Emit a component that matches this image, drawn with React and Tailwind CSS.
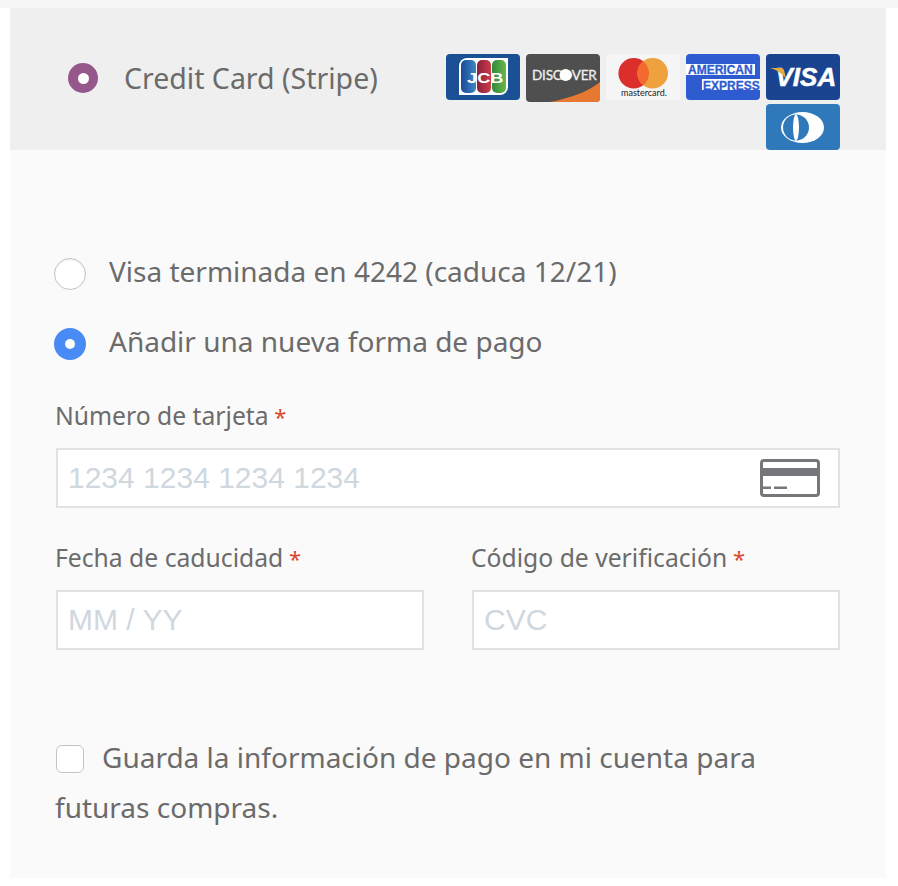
const JcbLogo = () => (
  <svg viewBox="0 0 74 46" className="w-[74px] h-[46px] block">
    <defs>
      <linearGradient id="jcbBlue" x1="0" x2="1" y1="0" y2="0">
        <stop offset="0" stopColor="#1a4a96" />
        <stop offset="1" stopColor="#3f86c6" />
      </linearGradient>
      <linearGradient id="jcbRed" x1="0" x2="1" y1="0" y2="0">
        <stop offset="0" stopColor="#86213c" />
        <stop offset="1" stopColor="#cf3b4b" />
      </linearGradient>
      <linearGradient id="jcbGreen" x1="0" x2="1" y1="0" y2="0">
        <stop offset="0" stopColor="#2f8a3e" />
        <stop offset="1" stopColor="#6cb64a" />
      </linearGradient>
    </defs>
    <rect width="74" height="46" rx="4" fill="#1b5094" />
    <path d="M21 4 H62 V33 a8 8 0 0 1 -8 8 H13 V12 a8 8 0 0 1 8 -8 Z" fill="#fff" />
    <rect x="15" y="6" width="15" height="33" rx="5" fill="url(#jcbBlue)" />
    <rect x="31" y="6" width="14" height="33" rx="5" fill="url(#jcbRed)" />
    <rect x="46" y="6" width="14" height="33" rx="5" fill="url(#jcbGreen)" />
    <g transform="scale(1.3 1)">
      <text x="16.2" y="29" fontFamily="Liberation Sans" fontWeight="700" fontSize="14" fill="#fff">JCB</text>
    </g>
  </svg>
);

const DiscoverLogo = () => (
  <svg viewBox="0 0 74 48" className="w-[74px] h-[48px] block">
    <rect width="74" height="48" rx="4" fill="#4f4f4f" />
    <path d="M24 48 C44 44 62 38 74 28 V44 a4 4 0 0 1 -4 4 Z" fill="#e77831" />
    <text x="6" y="26" fontFamily="Lato" fontWeight="400" fontSize="13.5" letterSpacing="-0.2" fill="#f0f0f0" stroke="#f0f0f0" strokeWidth="0.3">DISCOVER</text>
    <circle cx="39.5" cy="21" r="6" fill="#fff" />
  </svg>
);

const MastercardLogo = () => (
  <svg viewBox="0 0 74 46" className="w-[74px] h-[46px] block">
    <rect width="74" height="46" rx="4" fill="#f5f5f5" />
    <circle cx="27.7" cy="19.3" r="15.3" fill="#dc2e2b" />
    <circle cx="46.7" cy="19.3" r="15.3" fill="#eea13c" />
    <path d="M37.2 7.3 A15.3 15.3 0 0 1 37.2 31.3 A15.3 15.3 0 0 1 37.2 7.3 Z" fill="#f4692f" />
    <text x="15" y="41.5" fontFamily="Lato" fontSize="9" fill="#222">mastercard.</text>
  </svg>
);

const AmexLogo = () => (
  <svg viewBox="0 0 74 46" className="w-[74px] h-[46px] block">
    <rect width="74" height="46" rx="4" fill="#2f5bd0" />
    <rect x="0" y="10" width="69" height="11" fill="#fff" />
    <rect x="16" y="25" width="58" height="11" fill="#fff" />
    <g transform="scale(1 1.1)">
      <text x="2" y="18.6" fontFamily="Liberation Sans" fontWeight="700" fontSize="12" fill="#2f5bd0" stroke="#2f5bd0" strokeWidth="0.3">AMERICAN</text>
      <text x="17" y="32.3" fontFamily="Liberation Sans" fontWeight="700" fontSize="12" fill="#2f5bd0" stroke="#2f5bd0" strokeWidth="0.3">EXPRESS</text>
    </g>
  </svg>
);

const VisaLogo = () => (
  <svg viewBox="0 0 74 46" className="w-[74px] h-[46px] block">
    <rect width="74" height="46" rx="4" fill="#1a4490" />
    <text x="9.5" y="32" fontFamily="Liberation Sans" fontWeight="700" fontStyle="italic" fontSize="26" fill="#fff" stroke="#fff" strokeWidth="0.5">VISA</text>
    <path d="M4 14 H15 C17 14 18 15 18.5 18 L20 25 C17 20 11 16 4 14 Z" fill="#e9a93c" />
  </svg>
);

const DinersLogo = () => (
  <svg viewBox="0 0 74 46" className="w-[74px] h-[46px] block">
    <rect width="74" height="46" rx="4" fill="#2f79bb" />
    <ellipse cx="36.5" cy="23.5" rx="21.5" ry="15.5" fill="#fff" />
    <circle cx="30" cy="23.5" r="13" fill="#2f79bb" />
    <ellipse cx="30" cy="23.5" rx="3" ry="13" fill="#fff" />
  </svg>
);

const CardIcon = () => (
  <svg viewBox="0 0 60 38" className="w-[60px] h-[38px] block">
    <rect x="1.5" y="1.5" width="57" height="35" rx="2.5" fill="#fff" stroke="#77777b" strokeWidth="3" />
    <rect x="2" y="9" width="56" height="8" fill="#77777b" />
    <rect x="3" y="27.5" width="8" height="2.5" fill="#77777b" />
    <rect x="14" y="27.5" width="13" height="2.5" fill="#77777b" />
  </svg>
);

const Required = () => <span className="text-[#d9472b] text-[22px]"> *</span>;

const CardField = ({ placeholder, children }) => (
  <div className="h-[60px] border-2 border-[#e2e2e2] bg-white flex items-center justify-between pl-[10px] pr-[18px]">
    <span className="text-[30px] text-[#cfd7df] font-['Liberation_Sans',sans-serif] -mt-[2px]">
      {placeholder}
    </span>
    {children}
  </div>
);

export default function App() {
  return (
    <div className="w-[898px] h-[886px] bg-white font-['Noto_Sans',sans-serif] text-[28px] text-[#6b6b6b]">
      <div className="h-[8px] bg-[#f6f6f6]" />
      <div className="ml-[10px] w-[876px]">
        <div className="h-[142px] bg-[#efefef] flex justify-between pl-[58px] pr-[46px]">
          <div className="flex items-center gap-[26px] h-[142px] pb-[2px]">
            <span className="w-[30px] h-[30px] rounded-full bg-[#96588a] flex items-center justify-center">
              <span className="w-[11px] h-[11px] rounded-full bg-white" />
            </span>
            <span className="text-[28.5px]">Credit Card (Stripe)</span>
          </div>
          <div className="w-[394px] pt-[46px] flex flex-wrap justify-end content-start gap-x-[6px] gap-y-[4px]">
            <div className="h-[46px]"><JcbLogo /></div>
            <div className="h-[46px]"><DiscoverLogo /></div>
            <MastercardLogo />
            <AmexLogo />
            <VisaLogo />
            <DinersLogo />
          </div>
        </div>

        <div className="h-[728px] bg-[#fafafa] pl-[44px] pr-[46px] pt-[108px]">
          <div className="h-[32px] flex items-center gap-[23px]">
            <span className="w-[32px] h-[32px] rounded-full bg-white border-[1.5px] border-[#c4c4c4] shadow-[inset_0_1px_2px_rgba(0,0,0,0.08)]" />
            <span className="-mt-[6px]">Visa terminada en 4242 (caduca 12/21)</span>
          </div>
          <div className="h-[32px] mt-[38px] flex items-center gap-[23px]">
            <span className="w-[32px] h-[32px] rounded-full bg-[#4a8af4] flex items-center justify-center">
              <span className="w-[10px] h-[10px] rounded-full bg-white" />
            </span>
            <span className="-mt-[6px]">Añadir una nueva forma de pago</span>
          </div>

          <div className="mt-[38px] ml-[2px]">
            <div className="h-[50px] text-[24.7px] leading-[36px] -ml-[1px]">
              Número de tarjeta<Required />
            </div>
            <CardField placeholder="1234 1234 1234 1234">
              <CardIcon />
            </CardField>
            <div className="grid grid-cols-2 gap-x-[48px] mt-[32px]">
              <div>
                <div className="h-[50px] text-[24.7px] leading-[36px] -ml-[1px]">
                  Fecha de caducidad<Required />
                </div>
                <CardField placeholder="MM / YY" />
              </div>
              <div>
                <div className="h-[50px] text-[24.7px] leading-[36px] -ml-[1px]">
                  Código de verificación<Required />
                </div>
                <CardField placeholder="CVC" />
              </div>
            </div>
            <p className="mt-[82px] w-[740px] leading-[50px] -ml-[1px]">
              <span className="inline-block align-[-5px] w-[28px] h-[28px] ml-[1px] rounded-[6px] bg-white border-[1.5px] border-[#c4c4c4] mr-[18px]" />
              Guarda la información de pago en mi cuenta para futuras compras.
            </p>
          </div>
        </div>
      </div>
    </div>
  );
}
